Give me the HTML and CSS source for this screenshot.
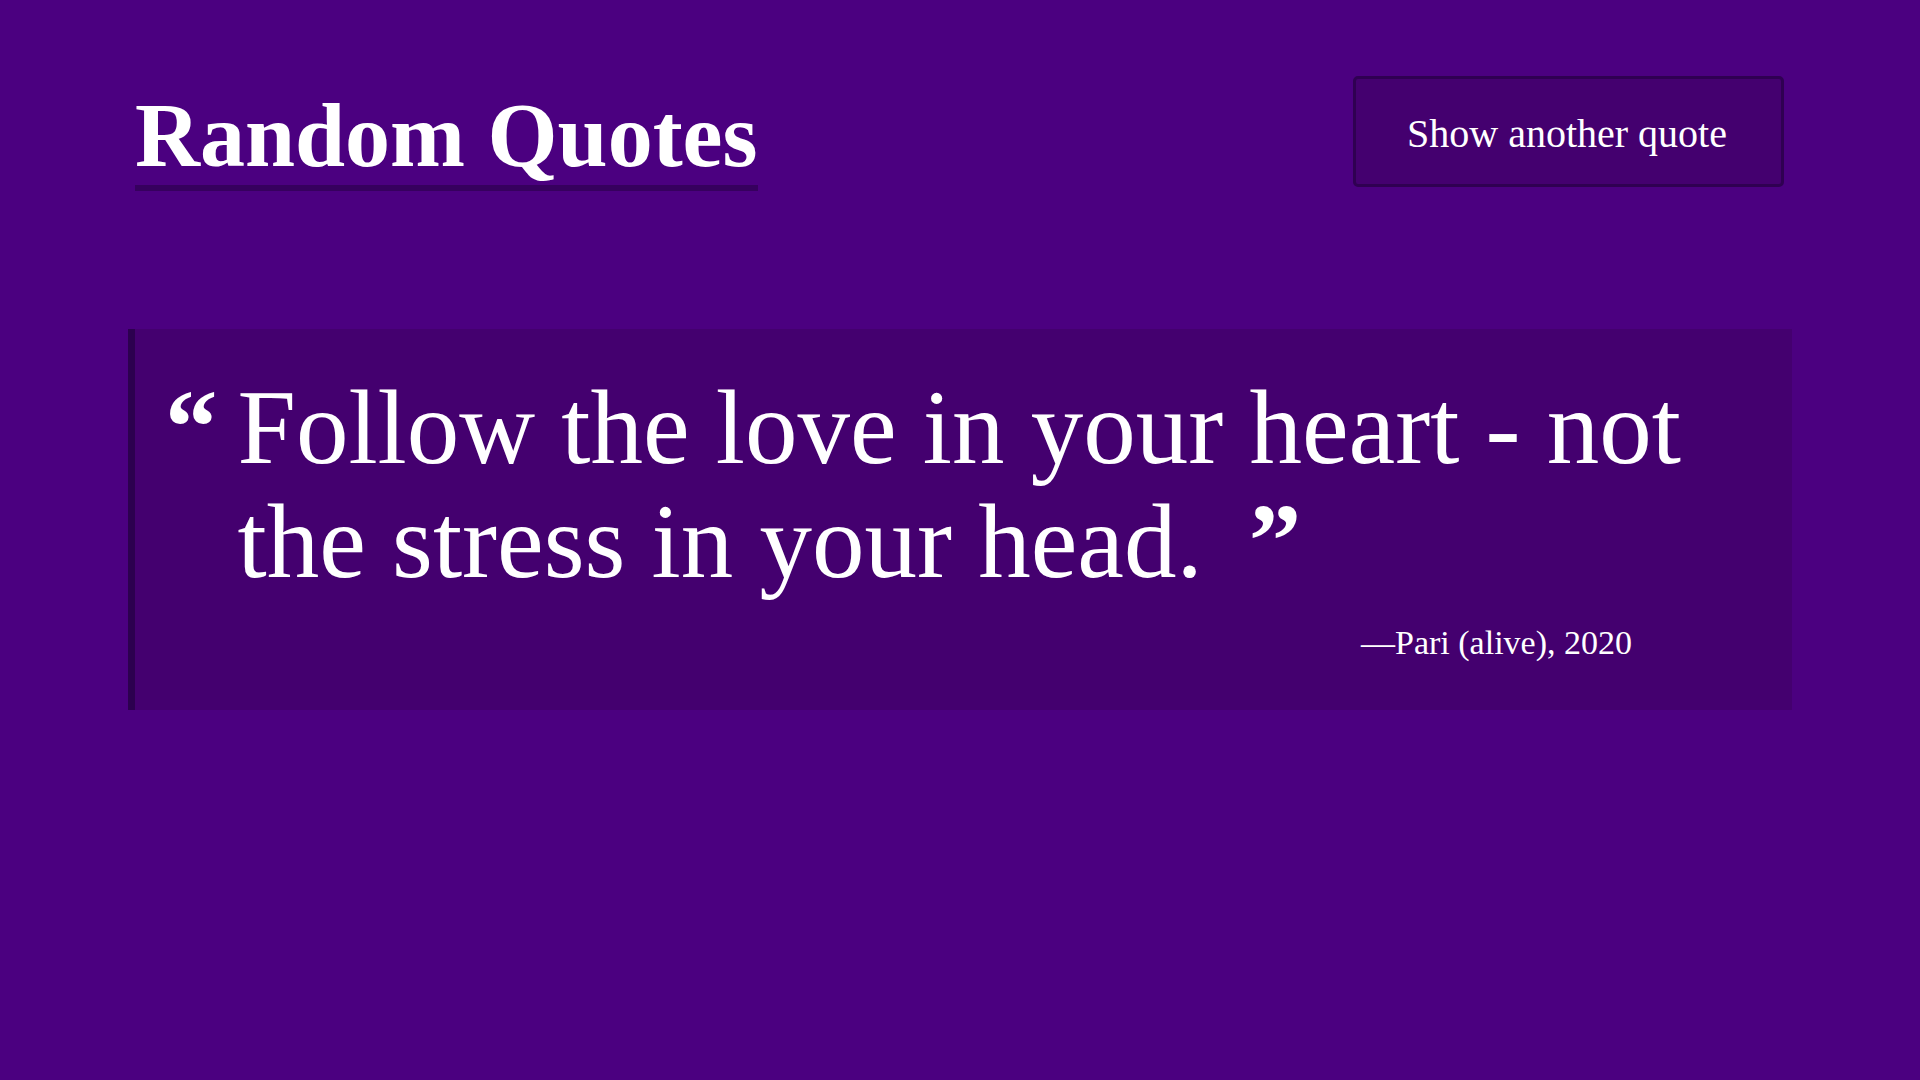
FILE: index.html
```html
<!DOCTYPE html>
<html lang="en">
<head>
<meta charset="utf-8">
<title>Random Quotes</title>
<link rel="stylesheet" href="styles.css">
</head>
<body>
<main class="page">
  <header class="header">
    <h1 class="title">Random Quotes</h1>
    <button class="btn" type="button">Show another quote</button>
  </header>
  <blockquote class="quote">
    <div class="quote-row">
      <span class="mark">“</span>
      <p class="quote-text">Follow the love in your heart - not the stress in your head.<span class="mark-close">”</span></p>
    </div>
    <p class="author">—Pari (alive), 2020</p>
  </blockquote>
</main>
</body>
</html>
```

FILE: styles.css
```css
html, body {
  margin: 0;
  padding: 0;
}

body {
  background: #4b0080;
  color: #ffffff;
  font-family: "Liberation Serif", "Times New Roman", serif;
  min-height: 1080px;
}

.page {
  padding: 76px 128px 0;
}

.header {
  display: flex;
  justify-content: space-between;
  align-items: flex-start;
  padding: 0 8px 0 7px;
}

.title {
  margin: 15px 0 0;
  font-size: 90px;
  font-weight: 700;
  line-height: 90px;
  padding-bottom: 4px;
  border-bottom: 6px solid #36005e;
}

.btn {
  box-sizing: border-box;
  width: 431px;
  height: 111px;
  margin: 0;
  padding: 3px 0 0 51px;
  text-align: left;
  background: #44006f;
  color: #ffffff;
  border: 3px solid #2f0052;
  border-radius: 5px;
  font-family: "Liberation Serif", "Times New Roman", serif;
  font-size: 40px;
  cursor: pointer;
}

.quote {
  margin: 138px 0 0;
  background: #44006f;
  border-left: 7px solid #2c004f;
  padding: 42px 40px 47px 30px;
}

.quote-row {
  display: flex;
  align-items: flex-start;
  font-size: 105px;
  line-height: 114px;
}

.mark {
  font-weight: 700;
  margin-right: 20px;
  flex: none;
}

.quote-text {
  margin: 0;
  flex: 1;
}

.mark-close {
  display: inline-block;
  font-weight: 700;
  margin-left: 46px;
}

.author {
  margin: 24px 120px 0 0;
  text-align: right;
  font-size: 34px;
  line-height: 40px;
}
```
